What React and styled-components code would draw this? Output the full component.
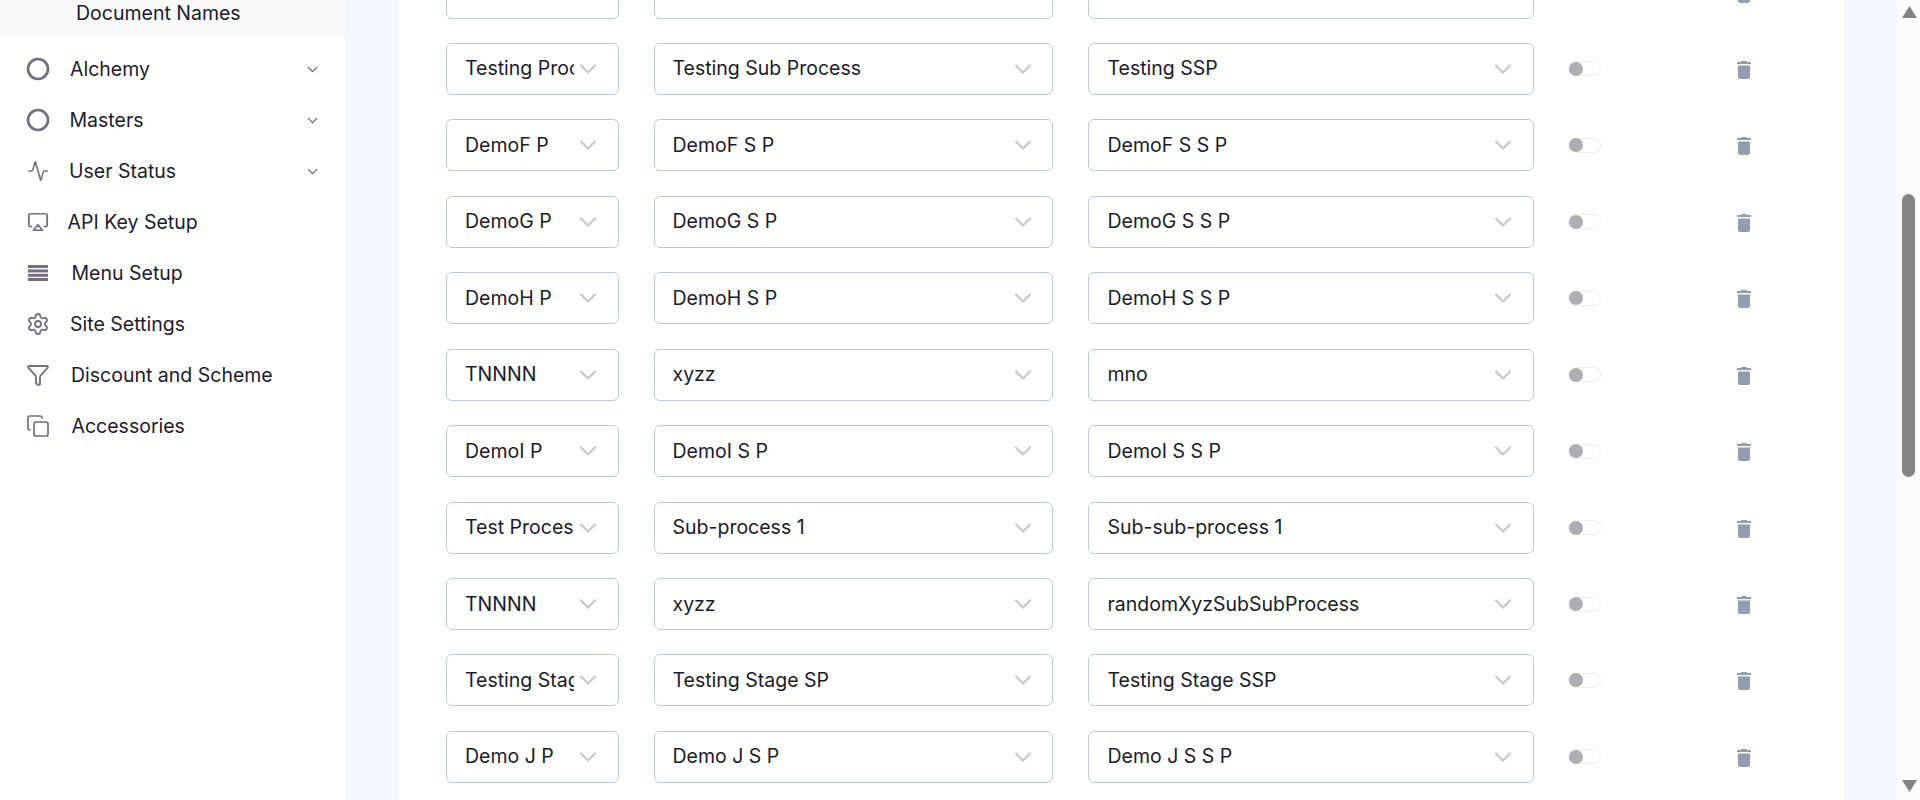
import { createGlobalStyle } from 'styled-components';
import styled from 'styled-components';
import { Circle, Activity, Airplay, Settings, Filter, Copy, ChevronDown } from 'lucide-react';

const Global = createGlobalStyle`
  html, body { margin: 0; height: 100%; overflow: hidden; }
  body { font-family: Inter, "Liberation Sans", sans-serif; background: #f4f7fd; }
`;

const Layout = styled.div`display: flex; width: 1920px; height: 800px; overflow: hidden;`;

const Sidebar = styled.aside`
  width: 345px; flex-shrink: 0; background: #fff;
  color: #1b1a30; font-size: 19.5px;
`;
const SubItem = styled.div`
  height: 37px; padding-left: 76px; background: #f9f9f9;
  display: flex; align-items: flex-start; line-height: 26px;
`;
const NavList = styled.nav`padding-top: 6.5px;`;
const NavItem = styled.div`
  height: 51px; padding: 0 24px 0 26px;
  display: flex; align-items: center; gap: ${p => p.$gap}px;
`;
const NavIcon = styled.span`
  width: 24px; height: 24px; flex-shrink: 0; color: #736d88;
  display: flex; align-items: center; justify-content: center;
`;
const NavLabel = styled.span`flex: 1; line-height: 24px; transform: translateY(-0.5px);`;
const NavCaret = styled.span`display: flex; color: #5f5c6c;`;

const MenuBars = () => (
  <svg width="20" height="16" viewBox="0 0 20 16" fill="currentColor">
    <rect y="0" width="20" height="3" />
    <rect y="4.4" width="20" height="3" />
    <rect y="8.8" width="20" height="3" />
    <rect y="13" width="20" height="3" />
  </svg>
);

const Main = styled.main`flex: 1; padding: 0 52px 0 53px; overflow: hidden;`;
const Card = styled.section`
  height: 800px; overflow: hidden; background: #fff;
  box-shadow: 0 0 4px rgba(60, 70, 100, 0.08);
`;
// list is scrolled part way, first row is cut by the top of the page
const Rows = styled.div`
  margin-top: -33.5px; padding-left: 48px;
  display: flex; flex-direction: column; gap: 24.44px;
`;
const Row = styled.div`
  display: grid; align-items: center; column-gap: 34.5px;
  grid-template-columns: 173px 399.5px 446px 134.5px 14px;
`;
const Select = styled.div`
  height: 52px; box-sizing: border-box; display: flex; align-items: center;
  border: 1px solid #bfc8da; border-radius: 6px; background: #fff;
  color: #1a1a2c; font-size: 19.5px;
`;
const SelectValue = styled.div`
  flex: 1; min-width: 0; margin-left: ${p => p.$left}px; padding-bottom: 1px;
  overflow: hidden; white-space: nowrap;
`;
const SelectArrow = styled.span`
  display: flex; flex-shrink: 0; color: #c8c8c8; margin: 0 ${p => p.$right}px 0 0;
`;
const Toggle = styled.span`
  width: 33px; height: 15px; box-sizing: border-box; display: flex; align-items: center;
  border: 1.5px solid #eceef4; border-radius: 8px; background: #fff;
`;
const Knob = styled.span`
  width: 14px; height: 14px; border-radius: 50%; background: #aeaeb2; margin-left: -0.5px;
`;
const TrashButton = styled.span`display: flex; color: #949cb2; transform: translateY(1px);`;

const TrashIcon = () => (
  <svg width="14" height="18" viewBox="0 0 14 18" fill="currentColor">
    <path d="M4.5 0h5l.6 1H14v2H0V1h3.9z" />
    <path d="M1 4.5h12V16a2 2 0 0 1-2 2H3a2 2 0 0 1-2-2z" />
  </svg>
);

const Scrollbar = styled.div`
  width: 23px; flex-shrink: 0; height: 800px; background: #fbfbfb;
  display: flex; flex-direction: column; align-items: flex-start; padding-left: 5px; box-sizing: border-box;
`;
const ScrollArrow = styled.svg`
  width: 15px; height: 12px; flex-shrink: 0; fill: #848484; margin-top: ${p => p.$top}px;
`;
const ScrollThumb = styled.div`
  width: 13px; height: 283px; border-radius: 7px; background: #848484; margin-top: 176px;
`;

const navItems = [
  { label: 'Alchemy', icon: <Circle size={24} strokeWidth={2.7} />, gap: 20, caret: true },
  { label: 'Masters', icon: <Circle size={24} strokeWidth={2.7} />, gap: 19.5, caret: true },
  { label: 'User Status', icon: <Activity size={22} strokeWidth={1.7} />, gap: 19, caret: true },
  { label: 'API Key Setup', icon: <Airplay size={22} strokeWidth={1.9} />, gap: 17.5 },
  { label: 'Menu Setup', icon: <MenuBars />, gap: 21.5 },
  { label: 'Site Settings', icon: <Settings size={24} strokeWidth={1.8} />, gap: 20 },
  { label: 'Discount and Scheme', icon: <Filter size={24} strokeWidth={1.8} />, gap: 21 },
  { label: 'Accessories', icon: <Copy size={24} strokeWidth={1.7} />, gap: 21.5 },
];

const rows = [
  ['DemoE P', 'DemoE S P', 'DemoE S S P'],
  ['Testing Process', 'Testing Sub Process', 'Testing SSP'],
  ['DemoF P', 'DemoF S P', 'DemoF S S P'],
  ['DemoG P', 'DemoG S P', 'DemoG S S P'],
  ['DemoH P', 'DemoH S P', 'DemoH S S P'],
  ['TNNNN', 'xyzz', 'mno'],
  ['DemoI P', 'DemoI S P', 'DemoI S S P'],
  ['Test Process', 'Sub-process 1', 'Sub-sub-process 1'],
  ['TNNNN', 'xyzz', 'randomXyzSubSubProcess'],
  ['Testing Stage P', 'Testing Stage SP', 'Testing Stage SSP'],
  ['Demo J P', 'Demo J S P', 'Demo J S S P'],
];

const Field = ({ value, left = 18, right }) => (
  <Select>
    <SelectValue $left={left}>{value}</SelectValue>
    <SelectArrow $right={right}><ChevronDown size={28} strokeWidth={1.9} /></SelectArrow>
  </Select>
);

export default function App() {
  return (
    <Layout>
      <Global />
      <Sidebar>
        <SubItem>Document Names</SubItem>
        <NavList>
          {navItems.map(item => (
            <NavItem key={item.label} $gap={item.gap}>
              <NavIcon>{item.icon}</NavIcon>
              <NavLabel>{item.label}</NavLabel>
              {item.caret && <NavCaret><ChevronDown size={17} strokeWidth={1.7} /></NavCaret>}
            </NavItem>
          ))}
        </NavList>
      </Sidebar>
      <Main>
        <Card>
          <Rows>
            {rows.map((r, i) => (
              <Row key={i}>
                <Field value={r[0]} right={16} />
                <Field value={r[1]} right={15} />
                <Field value={r[2]} left={19} right={16} />
                <Toggle><Knob /></Toggle>
                <TrashButton><TrashIcon /></TrashButton>
              </Row>
            ))}
          </Rows>
        </Card>
      </Main>
      <Scrollbar>
        <ScrollArrow $top={6} viewBox="0 0 15 12"><path d="M7.5 0 15 12H0z" /></ScrollArrow>
        <ScrollThumb />
        <ScrollArrow $top={303} viewBox="0 0 15 12"><path d="M0 0h15L7.5 12z" /></ScrollArrow>
      </Scrollbar>
    </Layout>
  );
}
